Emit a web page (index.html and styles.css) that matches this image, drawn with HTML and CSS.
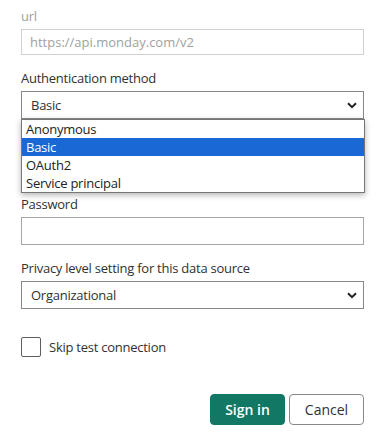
FILE: index.html
```html
<!DOCTYPE html>
<html lang="en">
<head>
    <meta charset="UTF-8">
    <title>Connection settings</title>
    <link rel="stylesheet" href="styles.css">
</head>
<body>
    <form class="conn-form">
        <div class="field">
            <label class="field-label disabled">url</label>
            <input class="text-input" type="text" placeholder="https://api.monday.com/v2" disabled>
        </div>

        <div class="field auth-field">
            <label class="field-label">Authentication method</label>
            <div class="select-box">
                <span>Basic</span>
                <svg class="chevron" width="10" height="7" viewBox="0 0 10 7"><path d="M1 1.2 L5 5.2 L9 1.2" fill="none" stroke="#222" stroke-width="2"/></svg>
            </div>
            <ul class="dropdown">
                <li>Anonymous</li>
                <li class="selected">Basic</li>
                <li>OAuth2</li>
                <li>Service principal</li>
            </ul>
        </div>

        <!-- username field sits under the open list -->
        <div class="field covered">
            <label class="field-label">Username</label>
            <input class="text-input" type="text">
        </div>

        <div class="field">
            <label class="field-label">Password</label>
            <input class="text-input" type="password">
        </div>

        <div class="field">
            <label class="field-label">Privacy level setting for this data source</label>
            <div class="select-box">
                <span>Organizational</span>
                <svg class="chevron" width="10" height="7" viewBox="0 0 10 7"><path d="M1 1.2 L5 5.2 L9 1.2" fill="none" stroke="#222" stroke-width="2"/></svg>
            </div>
        </div>

        <label class="check-row">
            <span class="check-box"></span>
            <span>Skip test connection</span>
        </label>

        <div class="actions">
            <button type="button" class="btn primary">Sign in</button>
            <button type="button" class="btn">Cancel</button>
        </div>
    </form>
</body>
</html>
```
FILE: styles.css
```css
body {
    margin: 0;
    background: #fff;
    font-family: "Open Sans", "Noto Sans", Arial, sans-serif;
    font-size: 13px;
    letter-spacing: -0.25px;
    color: #323130;
}
.conn-form {
    width: 343px;
    padding: 6px 0 0 21px;
}
.field {
    margin-bottom: 13px;
}
.field.covered {
    visibility: hidden;
    margin-bottom: 11px;
}
.field-label {
    display: block;
    line-height: 20px;
    margin-bottom: 3px;
}
.field-label.disabled {
    color: #a19f9d;
}
.text-input {
    display: block;
    box-sizing: border-box;
    width: 100%;
    height: 28px;
    border: 1px solid #a6a6a6;
    border-radius: 0;
    padding: 0 8px;
    font: inherit;
    background: #fff;
}
.text-input:disabled {
    height: 26px;
    border-color: #d2d0ce;
    background: #fff;
}
.text-input::placeholder {
    color: #a19f9d;
}
.auth-field {
    position: relative;
}
.select-box {
    display: flex;
    align-items: center;
    justify-content: space-between;
    box-sizing: border-box;
    height: 28px;
    padding: 0 6px 0 9px;
    border: 1px solid #8a8886;
    background: #fff;
}
.chevron {
    margin-top: 1px;
}
.dropdown {
    position: absolute;
    left: 0;
    top: 51px;
    width: 344px;
    box-sizing: border-box;
    margin: 0;
    padding: 0;
    list-style: none;
    background: #fff;
    border: 1px solid #767676;
    box-shadow: 0 2px 6px rgba(0,0,0,0.3);
    z-index: 10;
}
.dropdown li {
    height: 18px;
    line-height: 18px;
    padding-left: 4px;
    color: #222;
}
.dropdown li.selected {
    background: #1a68d4;
    color: #fff;
}
.check-row {
    display: flex;
    align-items: center;
    gap: 8px;
    margin-top: 28px;
}
.check-box {
    width: 20px;
    height: 20px;
    box-sizing: border-box;
    border: 1px solid #605e5c;
    border-radius: 2px;
}
.actions {
    display: flex;
    justify-content: flex-end;
    gap: 4px;
    margin-top: 37px;
}
.btn {
    width: 75px;
    height: 31px;
    border: 1px solid #8a8886;
    border-radius: 4px;
    background: #fff;
    color: #323130;
    font: inherit;
    font-size: 14px;
}
.btn.primary {
    background: #117865;
    border-color: #117865;
    color: #fff;
    font-weight: 600;
}
```
